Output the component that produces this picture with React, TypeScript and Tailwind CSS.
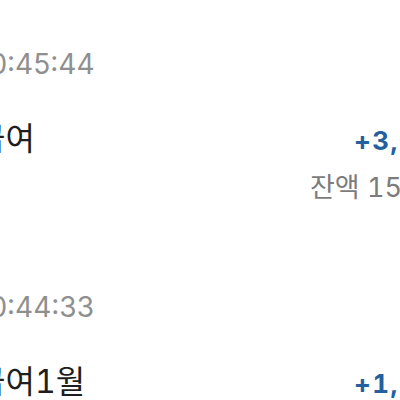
import React from "react";

interface Entry {
  time: string;
  name: string;
  amount: string;
  balance: string;
}

const entries: Entry[] = [
  { time: "10:45:44", name: "급여", amount: "+3,000,000원", balance: "잔액 15,320,000원" },
  { time: "10:44:33", name: "급여1월", amount: "+1,500,000원", balance: "잔액 12,320,000원" },
];

export default function App() {
  return (
    <div className="w-[400px] h-[400px] overflow-hidden bg-white font-[Inter,'Noto_Sans_CJK_KR',sans-serif]">
      <ul className="pt-[50px]">
        {entries.map((e) => (
          <li key={e.time} className="h-[243px]">
            {/* time */}
            <p className="-ml-[22px] text-[28px] leading-[28px] text-[#8f8f8f] whitespace-nowrap">{e.time}</p>

            {/* name + amount */}
            <div className="mt-[45px] flex items-baseline whitespace-nowrap tabular-nums">
              <div className="w-[334px] shrink-0 -ml-[24px] text-[32px] leading-[32px] text-[#1e1e1e]">{e.name}</div>
              <div className="pl-[44px] text-[26px] leading-[26px] font-bold tracking-[1.5px] text-[#22609e]">{e.amount}</div>
            </div>

            {/* balance */}
            <p className="mt-[19px] pl-[310px] text-[27px] leading-[27px] text-[#7c7c7c] whitespace-nowrap tabular-nums">{e.balance}</p>
          </li>
        ))}
      </ul>
    </div>
  );
}
